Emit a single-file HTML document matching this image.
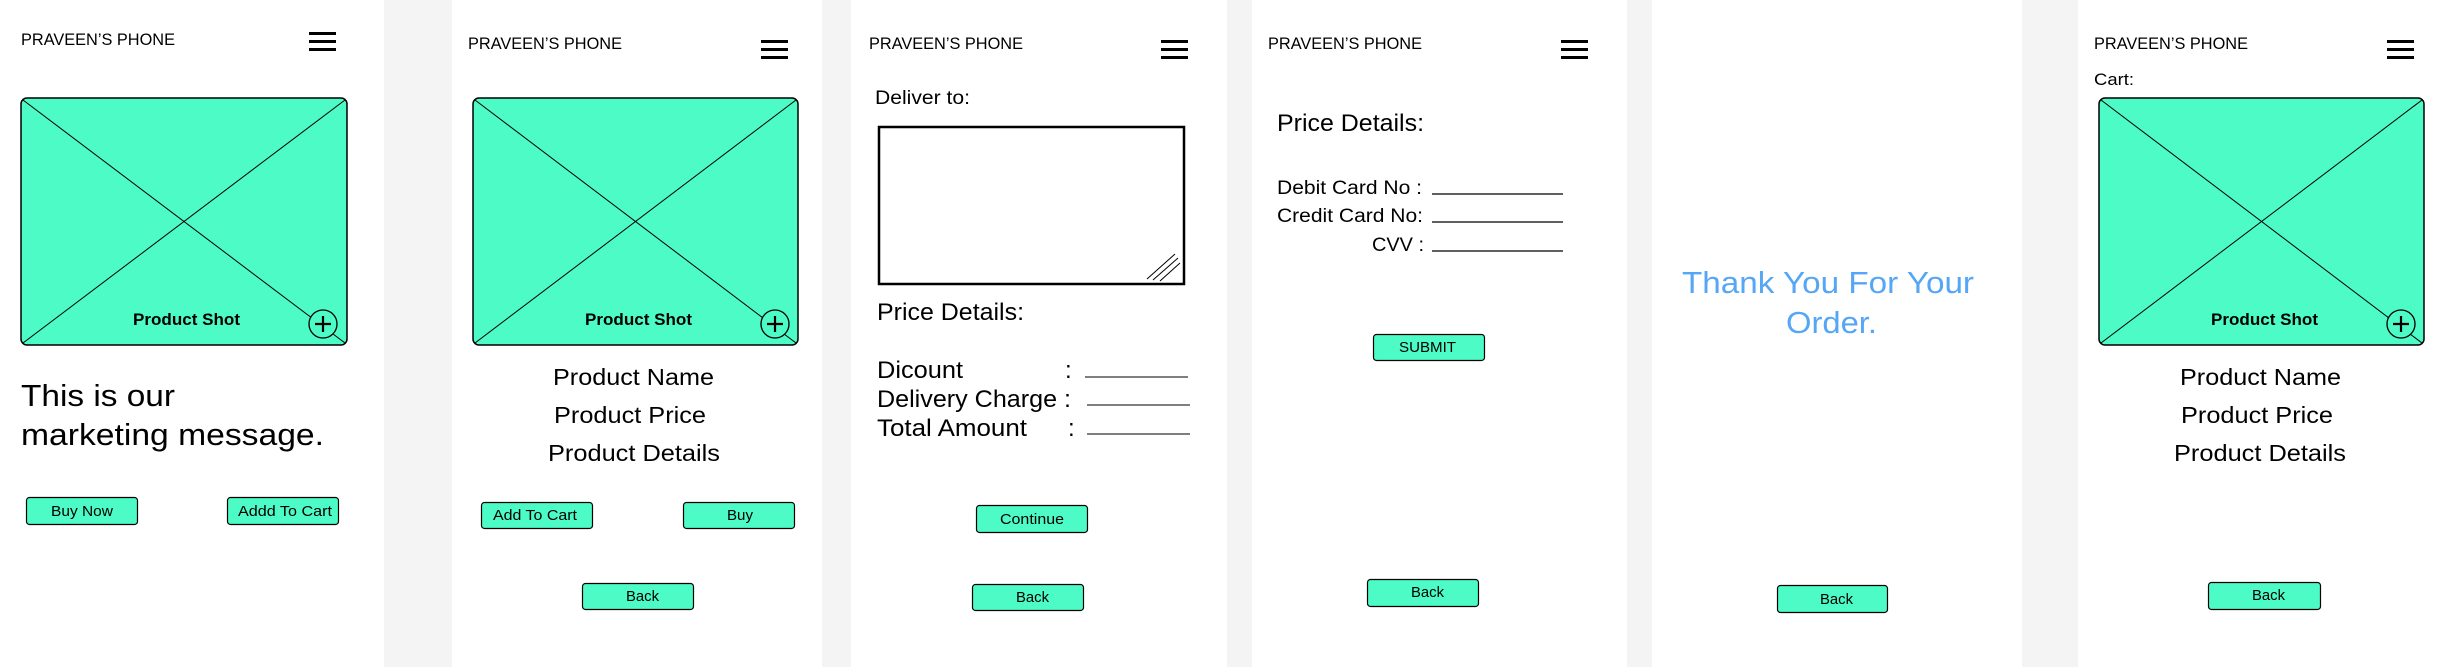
<!DOCTYPE html>
<html><head><meta charset="utf-8"><style>
html,body{margin:0;padding:0;background:#f4f4f4;}
svg{display:block;font-family:"Liberation Sans",sans-serif;}
</style></head><body>
<svg width="2448" height="667" viewBox="0 0 2448 667" xmlns="http://www.w3.org/2000/svg">
<rect x="0" y="0" width="2448" height="667" fill="#f4f4f4"/>
<rect x="0" y="0" width="384" height="667" fill="#fff"/>
<rect x="452" y="0" width="370" height="667" fill="#fff"/>
<rect x="851" y="0" width="376" height="667" fill="#fff"/>
<rect x="1252" y="0" width="375" height="667" fill="#fff"/>
<rect x="1652" y="0" width="370" height="667" fill="#fff"/>
<rect x="2078" y="0" width="370" height="667" fill="#fff"/>

<g fill="#000" font-size="17" lengthAdjust="spacingAndGlyphs">
<text x="21" y="45" textLength="154" lengthAdjust="spacingAndGlyphs">PRAVEEN’S PHONE</text>
<text x="468" y="49" textLength="154" lengthAdjust="spacingAndGlyphs">PRAVEEN’S PHONE</text>
<text x="869" y="49" textLength="154" lengthAdjust="spacingAndGlyphs">PRAVEEN’S PHONE</text>
<text x="1268" y="49" textLength="154" lengthAdjust="spacingAndGlyphs">PRAVEEN’S PHONE</text>
<text x="2094" y="49" textLength="154" lengthAdjust="spacingAndGlyphs">PRAVEEN’S PHONE</text>
</g>
<g fill="#000">
<rect x="309" y="32" width="27" height="3"/><rect x="309" y="40" width="27" height="3"/><rect x="309" y="48" width="27" height="3"/>
<rect x="761" y="40" width="27" height="3"/><rect x="761" y="48" width="27" height="3"/><rect x="761" y="56" width="27" height="3"/>
<rect x="1161" y="40" width="27" height="3"/><rect x="1161" y="48" width="27" height="3"/><rect x="1161" y="56" width="27" height="3"/>
<rect x="1561" y="40" width="27" height="3"/><rect x="1561" y="48" width="27" height="3"/><rect x="1561" y="56" width="27" height="3"/>
<rect x="2387" y="40" width="27" height="3"/><rect x="2387" y="48" width="27" height="3"/><rect x="2387" y="56" width="27" height="3"/>
</g>

<g>
<rect x="21" y="98" width="326" height="247" rx="6" fill="#4cfbc5" stroke="#000" stroke-width="1.5"/>
<path d="M23 100L345 343M345 100L23 343" stroke="#000" stroke-width="1"/>
<circle cx="323" cy="324" r="14" fill="#4cfbc5" stroke="#000" stroke-width="1.3"/>
<path d="M323 316v16M315 324h16" stroke="#000" stroke-width="2.2"/>
<text x="133" y="325" font-size="17" font-weight="bold" textLength="107" lengthAdjust="spacingAndGlyphs">Product Shot</text>
</g>
<g>
<rect x="473" y="98" width="325" height="247" rx="6" fill="#4cfbc5" stroke="#000" stroke-width="1.5"/>
<path d="M475 100L796 343M796 100L475 343" stroke="#000" stroke-width="1"/>
<circle cx="775" cy="324" r="14" fill="#4cfbc5" stroke="#000" stroke-width="1.3"/>
<path d="M775 316v16M767 324h16" stroke="#000" stroke-width="2.2"/>
<text x="585" y="325" font-size="17" font-weight="bold" textLength="107" lengthAdjust="spacingAndGlyphs">Product Shot</text>
</g>
<g>
<rect x="2099" y="98" width="325" height="247" rx="6" fill="#4cfbc5" stroke="#000" stroke-width="1.5"/>
<path d="M2101 100L2422 343M2422 100L2101 343" stroke="#000" stroke-width="1"/>
<circle cx="2401" cy="324" r="14" fill="#4cfbc5" stroke="#000" stroke-width="1.3"/>
<path d="M2401 316v16M2393 324h16" stroke="#000" stroke-width="2.2"/>
<text x="2211" y="325" font-size="17" font-weight="bold" textLength="107" lengthAdjust="spacingAndGlyphs">Product Shot</text>
</g>

<text x="21" y="406" font-size="31" textLength="154" lengthAdjust="spacingAndGlyphs">This is our</text>
<text x="21" y="445" font-size="31" textLength="303" lengthAdjust="spacingAndGlyphs">marketing message.</text>

<g font-size="23">
<text x="553" y="385" textLength="161" lengthAdjust="spacingAndGlyphs">Product Name</text>
<text x="554" y="423" textLength="152" lengthAdjust="spacingAndGlyphs">Product Price</text>
<text x="548" y="461" textLength="172" lengthAdjust="spacingAndGlyphs">Product Details</text>
<text x="2180" y="385" textLength="161" lengthAdjust="spacingAndGlyphs">Product Name</text>
<text x="2181" y="423" textLength="152" lengthAdjust="spacingAndGlyphs">Product Price</text>
<text x="2174" y="461" textLength="172" lengthAdjust="spacingAndGlyphs">Product Details</text>
</g>

<text x="875" y="104" font-size="19" textLength="95" lengthAdjust="spacingAndGlyphs">Deliver to:</text>
<rect x="879" y="127" width="305" height="157" fill="#fff" stroke="#000" stroke-width="2.5"/>
<path d="M1147 279L1175 254M1153 280L1178 258M1160 281L1180 263" stroke="#000" stroke-width="1"/>
<text x="877" y="320" font-size="24" textLength="147" lengthAdjust="spacingAndGlyphs">Price Details:</text>
<g font-size="24">
<text x="877" y="378" textLength="86" lengthAdjust="spacingAndGlyphs">Dicount</text><text x="1065" y="378">:</text>
<text x="877" y="407" textLength="194" lengthAdjust="spacingAndGlyphs">Delivery Charge :</text>
<text x="877" y="436" textLength="150" lengthAdjust="spacingAndGlyphs">Total Amount</text><text x="1068" y="436">:</text>
</g>
<path d="M1085 377H1188M1087 405H1190M1087 434H1190" stroke="#333" stroke-width="1.3"/>

<text x="1277" y="131" font-size="24" textLength="147" lengthAdjust="spacingAndGlyphs">Price Details:</text>
<g font-size="19">
<text x="1277" y="194" textLength="145" lengthAdjust="spacingAndGlyphs">Debit Card No :</text>
<text x="1277" y="222" textLength="146" lengthAdjust="spacingAndGlyphs">Credit Card No:</text>
<text x="1372" y="251" textLength="52" lengthAdjust="spacingAndGlyphs">CVV :</text>
</g>
<path d="M1432 194H1563M1432 222H1563M1432 251H1563" stroke="#000" stroke-width="1.2"/>

<g font-size="31" fill="#55a6f5">
<text x="1682" y="293" textLength="292" lengthAdjust="spacingAndGlyphs">Thank You For Your</text>
<text x="1786" y="333" textLength="91" lengthAdjust="spacingAndGlyphs">Order.</text>
</g>

<text x="2094" y="85" font-size="17" textLength="40" lengthAdjust="spacingAndGlyphs">Cart:</text>

<g fill="#4cfbc5" stroke="#000" stroke-width="1.2">
<rect x="26.5" y="497.5" width="111" height="27" rx="3"/>
<rect x="227.5" y="497.5" width="111" height="27" rx="3"/>
<rect x="481.5" y="502.5" width="111" height="26" rx="3"/>
<rect x="683.5" y="502.5" width="111" height="26" rx="3"/>
<rect x="582.5" y="583.5" width="111" height="26" rx="3"/>
<rect x="976.5" y="505.5" width="111" height="27" rx="3"/>
<rect x="972.5" y="584.5" width="111" height="26" rx="3"/>
<rect x="1373.5" y="334.5" width="111" height="26" rx="3"/>
<rect x="1367.5" y="579.5" width="111" height="27" rx="3"/>
<rect x="1777.5" y="585.5" width="110" height="27" rx="3"/>
<rect x="2208.5" y="582.5" width="112" height="27" rx="3"/>
</g>
<g font-size="15" fill="#000">
<text x="51" y="516" textLength="62" lengthAdjust="spacingAndGlyphs">Buy Now</text>
<text x="238" y="516" textLength="94" lengthAdjust="spacingAndGlyphs">Addd To Cart</text>
<text x="493" y="520" textLength="84" lengthAdjust="spacingAndGlyphs">Add To Cart</text>
<text x="727" y="520" textLength="26" lengthAdjust="spacingAndGlyphs">Buy</text>
<text x="626" y="601" textLength="33" lengthAdjust="spacingAndGlyphs">Back</text>
<text x="1000" y="524" textLength="64" lengthAdjust="spacingAndGlyphs">Continue</text>
<text x="1016" y="602" textLength="33" lengthAdjust="spacingAndGlyphs">Back</text>
<text x="1399" y="352" textLength="57" lengthAdjust="spacingAndGlyphs">SUBMIT</text>
<text x="1411" y="597" textLength="33" lengthAdjust="spacingAndGlyphs">Back</text>
<text x="1820" y="604" textLength="33" lengthAdjust="spacingAndGlyphs">Back</text>
<text x="2252" y="600" textLength="33" lengthAdjust="spacingAndGlyphs">Back</text>
</g>
</svg>
</body></html>
